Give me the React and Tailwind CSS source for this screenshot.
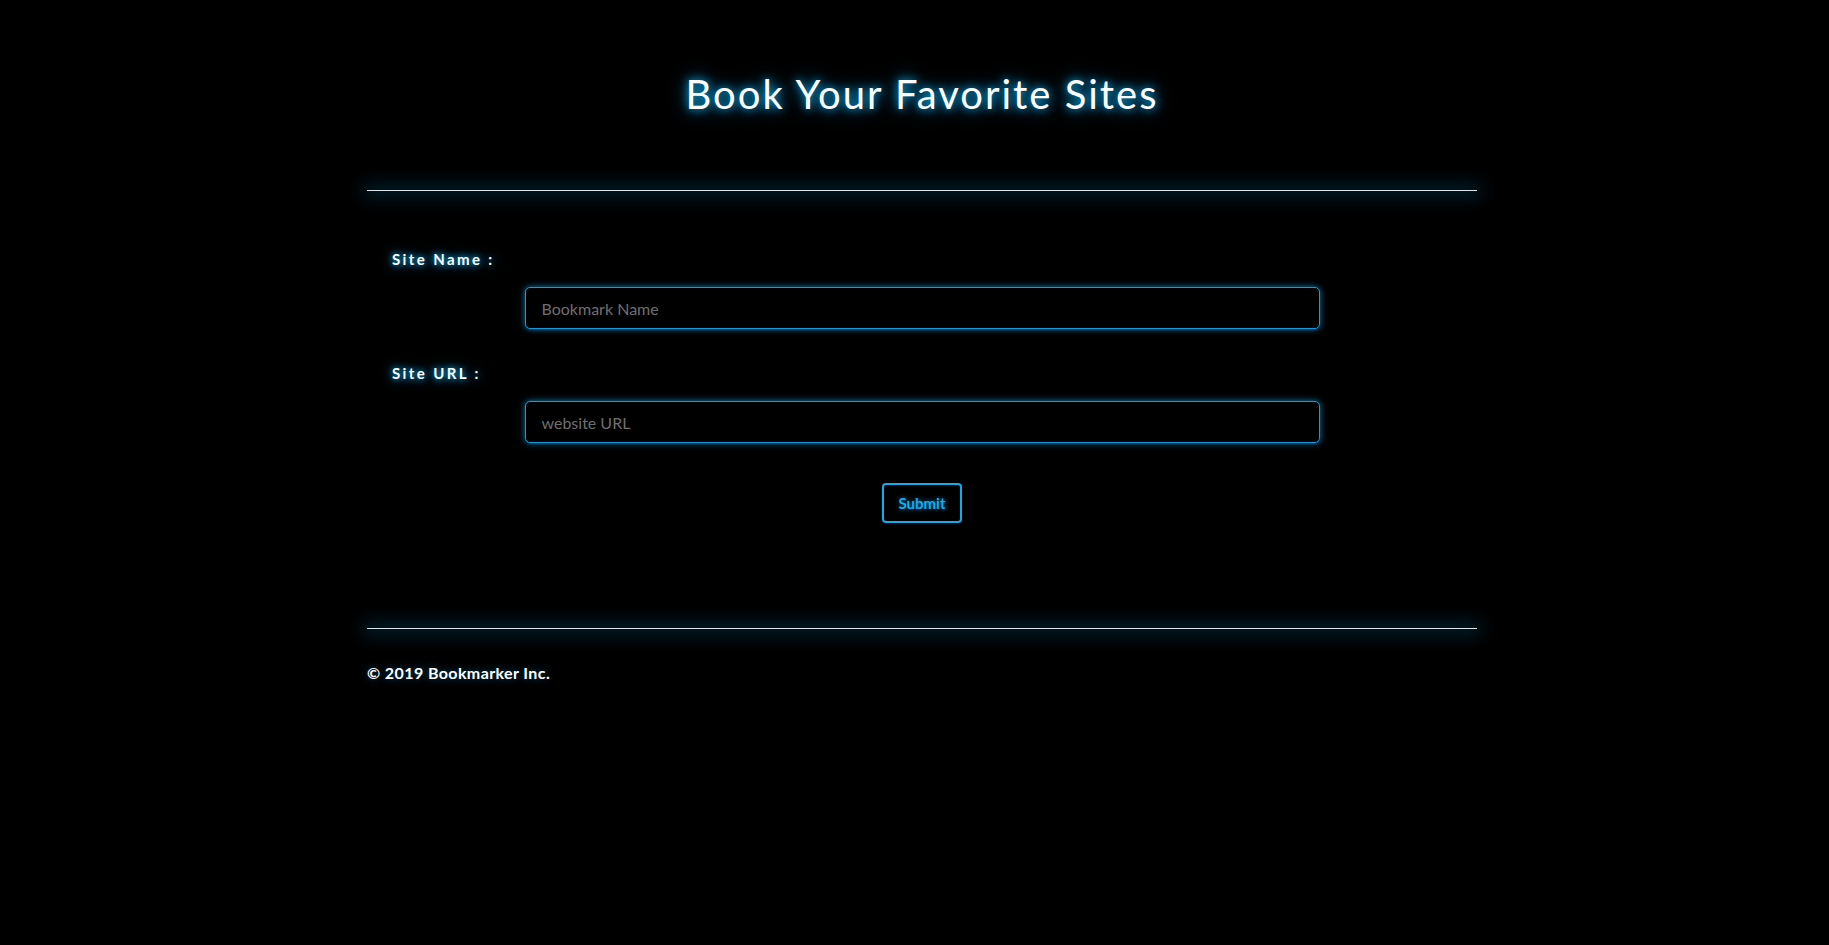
export default function App() {
  return (
    <div className="min-h-screen w-full bg-black" style={{ fontFamily: 'Lato, "Open Sans", sans-serif' }}>
      <div className="ml-[367px] w-[1110px] pt-[70px]">
        <h1 className="text-center text-[40px] leading-[48px] font-normal text-white tracking-[2px] [text-shadow:0_0_8px_#0ab4f5,0_0_18px_#0a8fd0]">
          Book Your Favorite Sites
        </h1>
        <div className="mt-[72px] h-px bg-[#dde6ea] shadow-[0_0_18px_4px_rgba(10,140,200,0.35)]"></div>
        <form className="pt-[56px]" onSubmit={(e) => e.preventDefault()}>
          <div className="pl-[25px] text-[15px] leading-[24px] font-bold tracking-[2.4px] text-white [text-shadow:0_0_6px_#0ab4f5,0_0_12px_#0a8fd0]">
            Site Name :
          </div>
          <div className="mt-[16px] flex justify-center">
            <input
              type="text"
              placeholder="Bookmark Name"
              className="h-[42px] w-[795px] rounded-[5px] border-[1.5px] border-[#0a9fe0] bg-black px-[16px] text-[16px] text-white outline-none placeholder:text-[#6f6f6f] shadow-[0_0_6px_rgba(10,160,230,0.8)]"
            />
          </div>
          <div className="mt-[32px] pl-[25px] text-[15px] leading-[24px] font-bold tracking-[2.4px] text-white [text-shadow:0_0_6px_#0ab4f5,0_0_12px_#0a8fd0]">
            Site URL :
          </div>
          <div className="mt-[16px] flex justify-center">
            <input
              type="text"
              placeholder="website URL"
              className="h-[42px] w-[795px] rounded-[5px] border-[1.5px] border-[#0a9fe0] bg-black px-[16px] text-[16px] text-white outline-none placeholder:text-[#6f6f6f] shadow-[0_0_6px_rgba(10,160,230,0.8)]"
            />
          </div>
          <div className="mt-[40px] flex justify-center">
            <button
              type="submit"
              className="h-[40px] w-[80px] rounded-[4px] border-2 border-[#0aaff0] bg-black text-[15px] font-bold text-[#12aef0] [text-shadow:0_0_5px_rgba(10,170,240,0.7)]"
            >
              Submit
            </button>
          </div>
        </form>
        <div className="mt-[105px] h-px bg-[#dde6ea] shadow-[0_0_18px_4px_rgba(10,140,200,0.35)]"></div>
        <p className="mt-[32px] text-[16px] leading-[24px] font-bold tracking-[0.4px] text-white [text-shadow:0_0_8px_rgba(10,140,200,0.6)]">
          © 2019 Bookmarker Inc.
        </p>
      </div>
    </div>
  );
}
